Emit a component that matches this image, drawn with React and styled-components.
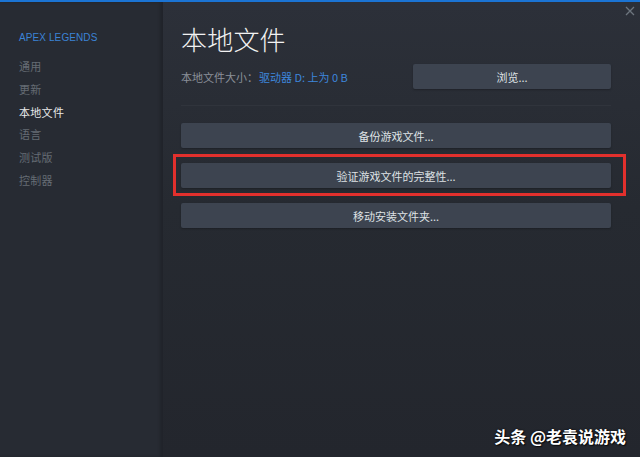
import React from 'react';
import styled, { createGlobalStyle } from 'styled-components';

const GlobalStyle = createGlobalStyle`
    html, body {
        margin: 0;
        padding: 0;
        background: #24272e;
    }
    body {
        font-family: "Noto Sans CJK SC", "Noto Sans", sans-serif;
    }
`;

const StyledWindow = styled.div`
    position: relative;
    display: flex;
    width: 640px;
    height: 457px;
    overflow: hidden;
    border-top: 2px solid #1b74d4;
    box-sizing: border-box;
`;

const StyledSidebar = styled.nav`
    display: flex;
    flex-direction: column;
    width: 163px;
    flex-shrink: 0;
    padding: 30px 0 0 19px;
    box-sizing: border-box;
    background-color: #272b33;
    box-shadow: inset -3px 0 3px rgba(0,0,0,0.18);
`;

const StyledGameName = styled.div`
    font-family: "Liberation Sans", "Noto Sans", sans-serif;
    font-size: 10px;
    line-height: 12px;
    color: #3b83d6;
    letter-spacing: 0.1px;
    margin-bottom: 11px;
`;

const StyledNavItem = styled.div`
    font-size: 11px;
    letter-spacing: 0.3px;
    line-height: 22.8px;
    color: ${({ active }) => (active ? '#e8e9ea' : '#656b74')};
`;

const StyledMain = styled.main`
    flex: 1;
    display: flex;
    flex-direction: column;
    padding: 20px 29px 0 18px;
    background: linear-gradient(180deg, #2c3039 0%, #262a31 45%, #23262d 100%);
`;

const StyledClose = styled.div`
    position: absolute;
    top: 4px;
    right: 5px;
    width: 10px;
    height: 10px;
    display: flex;
`;

const StyledTitle = styled.h1`
    margin: 0;
    font-size: 26px;
    font-weight: 300;
    line-height: 34px;
    color: #f2f2f2;
    letter-spacing: 0.2px;
`;

const StyledSizeRow = styled.div`
    display: flex;
    align-items: center;
    justify-content: space-between;
    margin-top: 8px;
`;

const StyledLabel = styled.span`
    font-size: 11px;
    color: #8a9099;
`;

const StyledValue = styled.span`
    color: #3d86dc;
    margin-left: 1px;
`;

const StyledButton = styled.button`
    display: flex;
    align-items: center;
    justify-content: center;
    width: ${({ narrow }) => (narrow ? '198px' : '100%')};
    height: 25px;
    padding: 0;
    border: none;
    border-radius: 2px;
    background-color: #3d4450;
    color: #dfe2e5;
    font-family: "Noto Sans CJK SC", "Noto Sans", sans-serif;
    font-size: 11px;
    box-shadow: 0 1px 2px rgba(0,0,0,0.25);
`;

const StyledDivider = styled.hr`
    margin: 16px 0 0;
    border: none;
    height: 1px;
    background-color: #30343c;
`;

const StyledActions = styled.div`
    display: flex;
    flex-direction: column;
    gap: 15px;
    margin-top: 17px;
`;

const StyledHighlight = styled.div`
    margin: -9px -15px -8px -8px;
    padding: 6px 12px 5px 5px;
    border: 3px solid #e2302d;
`;

const StyledWatermark = styled.div`
    position: absolute;
    right: 14px;
    bottom: 11px;
    font-size: 16px;
    line-height: 20px;
    font-weight: 700;
    color: #ffffff;
    text-shadow: 0 0 2px rgba(0,0,0,0.9), 1px 1px 1px rgba(0,0,0,0.7);
`;

const navItems = ['通用', '更新', '本地文件', '语言', '测试版', '控制器'];

const App = () => (
    <>
        <GlobalStyle />
        <StyledWindow>
            <StyledSidebar>
                <StyledGameName>APEX LEGENDS</StyledGameName>
                {navItems.map(item => (
                    <StyledNavItem key={item} active={item === '本地文件'}>{item}</StyledNavItem>
                ))}
            </StyledSidebar>
            <StyledMain>
                <StyledTitle>本地文件</StyledTitle>
                <StyledSizeRow>
                    <StyledLabel>
                        本地文件大小：
                        <StyledValue>驱动器 D: 上为 0 B</StyledValue>
                    </StyledLabel>
                    <StyledButton narrow>浏览...</StyledButton>
                </StyledSizeRow>
                <StyledDivider />
                <StyledActions>
                    <StyledButton>备份游戏文件...</StyledButton>
                    <StyledHighlight>
                        <StyledButton>验证游戏文件的完整性...</StyledButton>
                    </StyledHighlight>
                    <StyledButton>移动安装文件夹...</StyledButton>
                </StyledActions>
            </StyledMain>
            <StyledClose>
                <svg width="10" height="10" viewBox="0 0 10 10">
                    <path d="M1 1L9 9M9 1L1 9" stroke="#6d757e" strokeWidth="1.3" />
                </svg>
            </StyledClose>
            <StyledWatermark>头条 @老袁说游戏</StyledWatermark>
        </StyledWindow>
    </>
);

export default App;
